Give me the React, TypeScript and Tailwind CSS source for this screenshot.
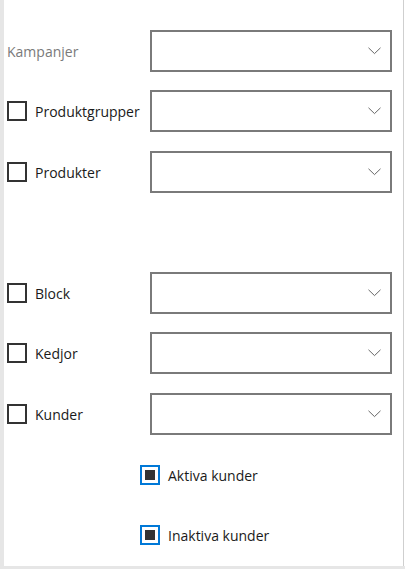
import React from "react";

function Chevron() {
  return (
    <svg width="13" height="8" viewBox="0 0 13 8" className="absolute right-[9px] top-1/2 -translate-y-1/2">
      <polyline points="0.5,0.8 6.5,6.6 12.5,0.8" fill="none" stroke="#666666" strokeWidth="1" />
    </svg>
  );
}

function Dropdown() {
  return (
    <div className="relative ml-auto h-[42px] w-[242px] border-2 border-[#7a7a7a] bg-white">
      <Chevron />
    </div>
  );
}

function CheckRow({ label, mt }: { label: string; mt: string }) {
  return (
    <div className={`flex h-[42px] items-center ${mt}`}>
      <div className="h-[20px] w-[20px] border-2 border-[#333333] bg-white" />
      <span className="ml-[8px] text-[14px] text-[#1a1a1a]">{label}</span>
      <Dropdown />
    </div>
  );
}

function SubCheck({ label, mt }: { label: string; mt: string }) {
  return (
    <div className={`flex h-[20px] items-center pl-[133px] ${mt}`}>
      <div className="flex h-[20px] w-[20px] items-center justify-center border-2 border-[#0078d7] bg-white">
        <div className="h-[10px] w-[10px] bg-[#333333]" />
      </div>
      <span className="ml-[8px] text-[14px] text-[#1a1a1a]">{label}</span>
    </div>
  );
}

export default function App() {
  return (
    <div
      className="h-[569px] w-[405px] bg-white"
      style={{ fontFamily: '"Open Sans", "Noto Sans", "Liberation Sans", sans-serif' }}
    >
      <div className="h-[566px] w-[404px] border-l-4 border-r border-[#e6e6e6] border-r-[#cfcfcf] border-b-0 pr-[11px] pl-[3px] pt-[30px]">
        <div className="flex h-[42px] items-center">
          <span className="text-[14px] text-[#7a7a7a]">Kampanjer</span>
          <Dropdown />
        </div>
        <CheckRow label="Produktgrupper" mt="mt-[18px]" />
        <CheckRow label="Produkter" mt="mt-[19px]" />
        <CheckRow label="Block" mt="mt-[79px]" />
        <CheckRow label="Kedjor" mt="mt-[18px]" />
        <CheckRow label="Kunder" mt="mt-[19px]" />
        <SubCheck label="Aktiva kunder" mt="mt-[30px]" />
        <SubCheck label="Inaktiva kunder" mt="mt-[40px]" />
      </div>
      <div className="h-[3px] w-[405px] bg-[#e6e6e6]" />
    </div>
  );
}
